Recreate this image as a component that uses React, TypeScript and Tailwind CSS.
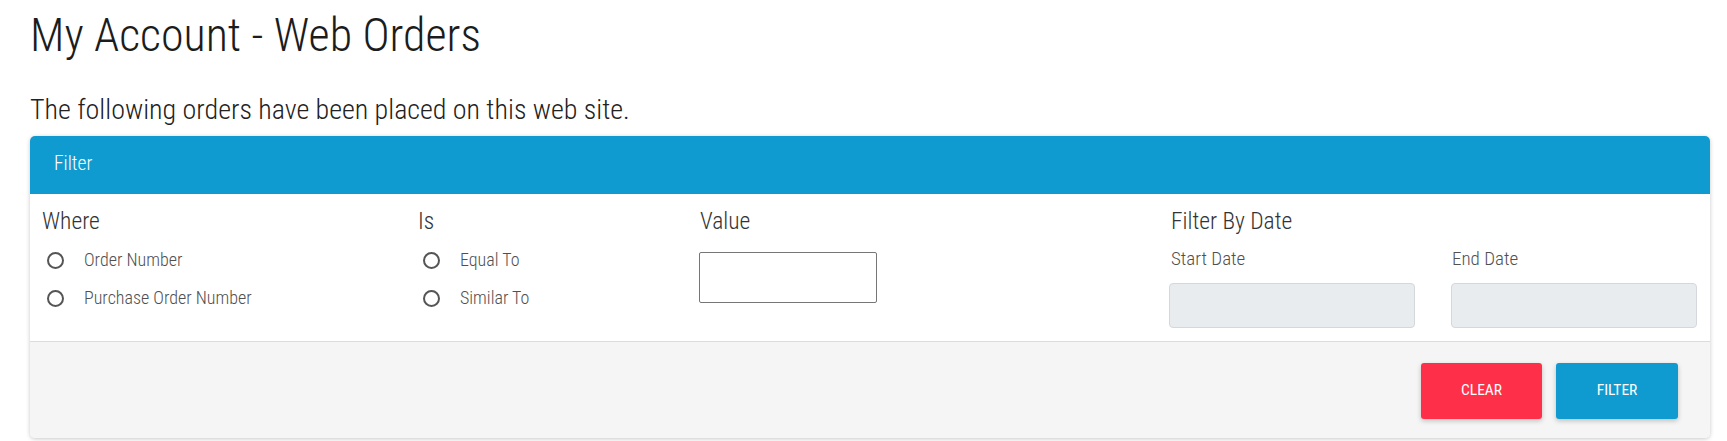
const font: React.CSSProperties = {
  fontFamily: "'Roboto', 'Noto Sans', sans-serif",
  fontStretch: "75%",
  fontWeight: 300,
};

function Radio({ label }: { label: string }) {
  return (
    <label className="flex h-[38px] items-center pl-[5px]">
      <span className="box-border h-[17px] w-[17px] shrink-0 rounded-full border-2 border-[#555]" />
      <span className="ml-[20px] text-[18px] leading-[22px] text-[#505050]">{label}</span>
    </label>
  );
}

export default function App() {
  return (
    <div className="min-h-[441px] bg-white pl-[30px] text-[#222]" style={font}>
      <h1 className="pt-[8px] text-[46px] leading-[54px] text-[#1c1c1c]" style={{ fontWeight: 300 }}>
        My Account - Web Orders
      </h1>
      <p className="mt-[32px] text-[28px] leading-[32px] text-[#222]">
        The following orders have been placed on this web site.
      </p>
      <div className="mt-[10px] w-[1680px] overflow-hidden rounded-[5px] bg-white shadow-[0_1px_4px_rgba(0,0,0,0.22)]">
        <div className="flex h-[58px] items-center bg-[#109bd0] pb-[2px] pl-[24px] text-[19.5px] leading-[22px] text-white">
          Filter
        </div>
        <div className="flex pb-[13px] pl-[12px] pt-[14px]">
          <div className="w-[376px]">
            <div className="text-[23.5px] leading-[26px] text-[#333]">Where</div>
            <div className="mt-[7px]">
              <Radio label="Order Number" />
              <Radio label="Purchase Order Number" />
            </div>
          </div>
          <div className="w-[281px]">
            <div className="text-[23.5px] leading-[26px] text-[#333]">Is</div>
            <div className="mt-[7px]">
              <Radio label="Equal To" />
              <Radio label="Similar To" />
            </div>
          </div>
          <div className="w-[470px]">
            <div className="pl-[1px] text-[23.5px] leading-[26px] text-[#333]">Value</div>
            <input
              type="text"
              className="mt-[18px] box-border h-[51px] w-[178px] rounded-[2px] border border-[#767676] bg-white outline-none"
            />
          </div>
          <div className="w-[528px]">
            <div className="pl-[2px] text-[23.5px] leading-[26px] text-[#333]">Filter By Date</div>
            <div className="mt-[13.5px] flex gap-[36px]">
              <div className="w-[246px]">
                <div className="pl-[2px] text-[19px] leading-[22px] text-[#505050]">Start Date</div>
                <div className="mt-[13px] box-border h-[45px] w-[246px] rounded-[4px] border border-[#d4d8dc] bg-[#e9ecef]" />
              </div>
              <div className="w-[246px]">
                <div className="pl-[1px] text-[19px] leading-[22px] text-[#505050]">End Date</div>
                <div className="mt-[13px] box-border h-[45px] w-[246px] rounded-[4px] border border-[#d4d8dc] bg-[#e9ecef]" />
              </div>
            </div>
          </div>
        </div>
        <div className="flex justify-end gap-[14px] border-t border-[#dcdcdc] bg-[#f5f5f5] pb-[19px] pr-[32px] pt-[21px]">
          <button className="h-[56px] w-[121px] rounded-[3px] bg-[#fe3049] text-[15.5px] uppercase text-white shadow-[0_2px_5px_rgba(0,0,0,0.22)]" style={{ fontWeight: 400 }}>
            Clear
          </button>
          <button className="h-[56px] w-[122px] rounded-[3px] bg-[#109bd0] text-[15.5px] uppercase text-white shadow-[0_2px_5px_rgba(0,0,0,0.22)]" style={{ fontWeight: 400 }}>
            Filter
          </button>
        </div>
      </div>
    </div>
  );
}
